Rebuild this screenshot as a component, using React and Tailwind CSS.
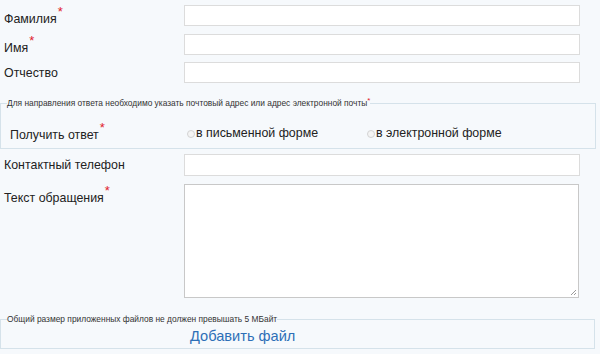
export default function App() {
  const Star = () => (
    <span className="relative -top-[7px] ml-[1px] text-[13px] leading-none text-[#e0202b]">*</span>
  );
  const Radio = ({ label }) => (
    <label className="flex items-center">
      <span className="mr-[1px] mt-[2px] inline-block h-[8px] w-[8px] rounded-full border border-[#d3d3d3] bg-[#f4f4f4]" />
      <span className="text-[12.4px] leading-[16px] text-[#222]">{label}</span>
    </label>
  );
  const Row = ({ children, label, cls = "", lcls = "" }) => (
    <div className={"flex h-[21px] items-center " + cls}>
      <div className={"relative w-[184px] pl-[4px] text-[12.4px] leading-[16px] " + lcls}>{label}</div>
      {children}
    </div>
  );
  return (
    <div
      className="h-[354px] w-[600px] overflow-hidden bg-[#f6f9fc] text-[#222]"
      style={{ fontFamily: '"Liberation Sans", Arial, sans-serif' }}
    >
      <div className="flex flex-col pt-[5px]">
        <Row label={<>Фамилия<Star /></>} lcls="top-[3px]">
          <div className="h-[21px] w-[396px] border border-[#dcdcdc] bg-white" />
        </Row>
        <Row label={<>Имя<Star /></>} cls="mt-[8px]" lcls="top-[3px]">
          <div className="h-[21px] w-[396px] border border-[#dcdcdc] bg-white" />
        </Row>
        <Row label="Отчество" cls="mt-[7px]" lcls="top-0">
          <div className="h-[21px] w-[396px] border border-[#dcdcdc] bg-white" />
        </Row>

        <fieldset className="mt-[15px] h-[51px] w-[596px] border border-[#d5e2ea] px-[6px]">
          <legend className="text-[8.4px] leading-[10px] text-[#333]">
            Для направления ответа необходимо указать почтовый адрес или адрес электронной почты
            <span className="relative -top-[3px] text-[8px] text-[#e0202b]">*</span>
          </legend>
          <div className="flex h-[20px] items-center mt-[14px]">
            <div className="relative top-[2px] w-[180px] pl-[3px] text-[12.4px] leading-[16px]">
              Получить ответ<Star />
            </div>
            <div className="w-[180px]">
              <Radio label="в письменной форме" />
            </div>
            <Radio label="в электронной форме" />
          </div>
        </fieldset>

        <Row label="Контактный телефон" cls="mt-[5px] h-[22px]">
          <div className="h-[22px] w-[396px] border border-[#dcdcdc] bg-white" />
        </Row>

        <div className="mt-[8px] flex items-start">
          <div className="w-[184px] pl-[4px] pt-[6px] text-[12.4px] leading-[16px]">
            Текст обращения<Star />
          </div>
          <div className="relative h-[114px] w-[395px] border border-[#c8c8c8] bg-white">
            <svg className="absolute bottom-[1px] right-[1px]" width="7" height="7" viewBox="0 0 7 7">
              <path d="M6 1L1 6M6 4L4 6" stroke="#9a9a9a" strokeWidth="1" />
            </svg>
          </div>
        </div>

        <fieldset className="mt-[16px] h-[35px] w-[595px] border border-[#d5e2ea] px-[6px]">
          <legend className="text-[8.4px] leading-[10px] text-[#333]">
            Общий размер приложенных файлов не должен превышать 5 МБайт
          </legend>
          <div className="pl-[183px] pt-[3px] text-[14.6px] leading-[18px] text-[#2d6fb7]">Добавить файл</div>
        </fieldset>
      </div>
    </div>
  );
}
